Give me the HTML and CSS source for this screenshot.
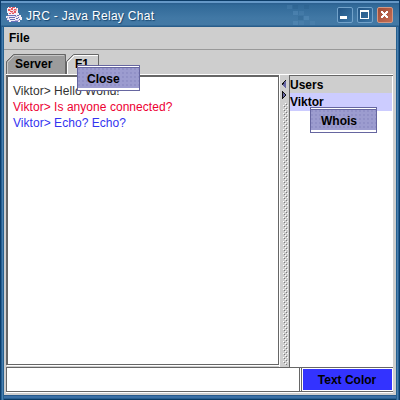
FILE: index.html
```html
<!DOCTYPE html>
<html lang="en">
<head>
<meta charset="utf-8">
<title>JRC - Java Relay Chat</title>
<link rel="stylesheet" href="styles.css">
</head>
<body>
<div class="window">
  <header class="titlebar">
    <svg class="logo" width="16" height="17" viewBox="0 0 16 17" shape-rendering="crispEdges">
      <path fill="#f4eef6" d="M2 1h8v1h2v5h1v2h2v2h1v3h-2v2H3v-1H1v-3H0v-2h2V7H1V2h1z"/>
      <path fill="#e4575f" d="M3 1h2v1H3zM6 1h3v1H6zM2 3h2v2H2zM5 2h2v2H5zM8 3h3v1H8zM4 5h3v1H4zM8 5h2v2H8zM3 7h2v1H3zM6 7h2v1H6z"/>
      <path fill="#f3a5ad" d="M4 3h1v2H4zM7 4h3v1H7zM10 2h1v3h-1zM5 6h3v1H5z"/>
      <path fill="#6870b8" d="M2 9h8v1H2zM11 9h2v1h-2zM3 11h6v1H3zM12 11h1v1h-1zM4 13h5v1H4zM10 12h2v1h-2zM1 14h2v1H1zM5 15h7v1H5zM13 13h1v1h-1z"/>
      <path fill="#b6afd7" d="M1 11h1v2H1zM9 10h2v1H9zM3 12h1v1H3zM9 14h4v1H9z"/>
    </svg>
    <h1 class="title">JRC - Java Relay Chat</h1>
    <svg class="pixels" width="30" height="22" viewBox="0 0 30 22" shape-rendering="crispEdges">
      <path fill="#5b91bd" opacity=".45" d="M7 7h5v4H7zM18 12h5v4h-5zM7 17h5v4H7z"/>
      <path fill="#5b91bd" opacity=".25" d="M1 1h5v4H1zM13 7h5v4h-5zM13 17h5v4h-5zM24 17h5v4h-5z"/>
      <path fill="#245782" opacity=".25" d="M7 1h5v4H7zM18 1h5v4h-5zM12 12h5v4h-5z"/>
    </svg>
    <div class="controls">
      <span class="control"><svg width="14" height="14" viewBox="0 0 14 14"><path fill="#fff" d="M2 8h7v3H2z"/></svg></span>
      <span class="control"><svg width="14" height="14" viewBox="0 0 14 14"><path fill="#fff" fill-rule="evenodd" d="M2 2h9v9H2zM3 4v6h7V4z"/></svg></span>
      <span class="control close"><svg width="14" height="14" viewBox="0 0 14 14" shape-rendering="crispEdges"><path fill="#fff" d="M3 3h2v1h1v1h1V4h1V3h2v2H9v1H8v1h1v1h1v2H8V9H7V8H6v1H5v1H3V8h1V7h1V6H4V5H3z"/></svg></span>
    </div>
  </header>
  <nav class="menubar"><span class="menu">File</span></nav>
  <main class="content">
    <div class="tabs">
      <div class="tab server">
        <svg class="tabshape" width="60" height="20" viewBox="0 0 60 20"><path fill="#9c9c9c" stroke="#666" d="M.5 20V7.500l7-7h52V20"/><path fill="none" stroke="#c6c6c6" d="M1.500 20V8.500l7-7H58"/></svg>
        <span>Server</span>
      </div>
      <div class="tab channel">
        <svg class="tabshape" width="33" height="21" viewBox="0 0 33 21"><path fill="#cecece" stroke="#666" d="M.5 20V7.500l7-7h25V20"/><path fill="none" stroke="#fff" d="M1.500 21V8.500l7-7H32"/></svg>
        <span>F1</span>
      </div>
    </div>
    <div class="split">
      <div class="chat">
        <p class="line plain">Viktor&gt; Hello World!</p>
        <p class="line red">Viktor&gt; Is anyone connected?</p>
        <p class="line blue">Viktor&gt; Echo? Echo?</p>
      </div>
      <div class="divider">
        <svg width="8" height="292" viewBox="0 0 8 292" shape-rendering="crispEdges">
          <defs><pattern id="bumps" width="4" height="4" patternUnits="userSpaceOnUse"><path fill="#fff" d="M0 0h1v1H0zM2 2h1v1H2z"/><path fill="#777" d="M1 1h1v1H1zM3 3h1v1H3z"/></pattern></defs>
          <path fill="#111" d="M5 4v9H4v-1H3v-1H2v-1H1V8h1V7h1V6h1V5h1z"/>
          <path fill="#6464a4" d="M4 6h1v7H4v-1H3v-1H2V9h1V7h1z"/>
          <path fill="#111" d="M1 16h1v1h1v1h1v1h1v2H4v1H3v1H2v1H1z"/>
          <path fill="#6464a4" d="M2 18h1v1h1v2H3v1H2z"/>
          <rect x="2" y="28" width="5" height="262" fill="url(#bumps)"/>
        </svg>
      </div>
      <div class="users">
        <div class="user heading">Users</div>
        <div class="user selected">Viktor</div>
      </div>
    </div>
    <div class="compose">
      <div class="entry"></div>
      <div class="colorframe"><div class="colorbutton">Text Color</div></div>
    </div>
  </main>
  <div class="popup popup-close"><div class="item">Close</div></div>
  <div class="popup popup-whois"><div class="item">Whois</div></div>
</div>
</body>
</html>
```
FILE: styles.css
```css
* { box-sizing: border-box; }
body { margin: 0; overflow: hidden; font: 12px/16px "Liberation Sans", Arial, sans-serif; color: #000; }
.window {
  position: relative; width: 400px; height: 400px; padding: 0 4px 5px;
  display: flex; flex-direction: column;
  background: linear-gradient(90deg, #0b3c6a 1px, #286193 1px 2px, #487eae 2px 3px, #25608f 3px 4px, transparent 4px 396px, #25608f 396px 397px, #487eae 397px 398px, #286193 398px 399px, #0b3c6a 399px),
    linear-gradient(#286193 395px, #25598c 395px 396px, #3c70a5 396px 398px, #275e90 398px 399px, #093963 399px);
}
.titlebar {
  flex: 0 0 27px; margin: 0 -3px; padding-left: 5px; display: flex; align-items: flex-start;
  background: linear-gradient(#0c3c68 1px, #6598c7 1px 3px, #2c6191 3px 4px, #316998 5px, #4178a5 18px, #4379a5 25px, #285d8b 26px);
}
.logo { margin-top: 6px; }
.title { margin: 8px 0 0 4px; font-size: 12px; line-height: 16px; font-weight: normal; color: #fff; text-shadow: 1px 1px 1px #16446d; letter-spacing: .3px; width: 120px; white-space: nowrap; }
.pixels { margin: 4px 0 0 140px; }
.controls { display: flex; gap: 4px; margin: 7px 0 0 21px; }
.control { width: 16px; height: 16px; border: 1px solid #72a2ca; border-radius: 2px; background: linear-gradient(135deg, #225585, #3b75a5); }
.control svg { display: block; }
.control.close { border-color: #d29884; background: linear-gradient(135deg, #a14d38, #c46d54); }
.menubar { flex: 0 0 23px; padding: 3px 5px; background: #cecece; border-bottom: 1px solid #999; font-weight: bold; }
.content { flex: 1; min-height: 0; display: flex; flex-direction: column; padding: 4px 3px 3px 2px; background: #cecece; }
.tabs { display: flex; height: 20px; font-weight: bold; }
.tab { position: relative; height: 20px; padding: 2px 0 0 9px; }
.server { width: 60px; }
.channel { width: 33px; }
.tabshape { position: absolute; left: 0; top: 0; }
.tab span { position: relative; }
.split { display: flex; flex: 0 0 293px; border-top: 1px solid #fff; }
.chat { flex: 0 0 273px; height: 290px; padding: 6px 5px; background: #fff; border: solid #666; border-width: 2px 1px 1px 2px; box-shadow: 1px 1px #fff; letter-spacing: .04px; }
.line { margin: 0; height: 16px; white-space: nowrap; }
.plain { color: #333; }
.red { color: #ed0033; }
.blue { color: #3333f0; }
.divider { flex: 0 0 10px; height: 292px; background: #cecece; border-left: 1px solid #fff; }
.divider svg { display: block; margin-left: 1px; }
.users { flex: 0 0 104px; height: 292px; background: #fff; border: solid #666; border-width: 1px 0 0 1px; font-weight: bold; }
.user { height: 17px; width: 102px; line-height: 19px; }
.heading { background: #cecece; }
.selected { background: #ccf; height: 18px; }
.compose { display: flex; flex: 0 0 25px; background: #fff; border: 1px solid #666; border-right: 0; box-shadow: 0 1px #fff; }
.entry { flex: 0 0 293px; border-right: 1px solid #666; }
.colorframe { flex: 1; margin-left: 1px; padding: 1px; border-left: 1px solid #666; }
.colorbutton { height: 21px; line-height: 23px; width: 89px; padding-right: 1px; background: #33f; text-align: center; font-weight: bold; }
.popup { position: absolute; border: 1px solid #6666a0; background: #fff; padding: 1px 0 2px; font-weight: bold; }
.popup-close { left: 77px; top: 65px; width: 63px; height: 26px; }
.popup-whois { left: 310px; top: 107px; width: 67px; height: 26px; }
.item { height: 21px; border-top: 1px solid #6666a0; padding-left: 10px; line-height: 22px; background: #9c9ccf; background-image: radial-gradient(circle at 1px 1px, #9090c6 0.7px, transparent 0.8px); background-size: 4px 4px; }
.popup-close .item { padding-left: 9px; }
```
